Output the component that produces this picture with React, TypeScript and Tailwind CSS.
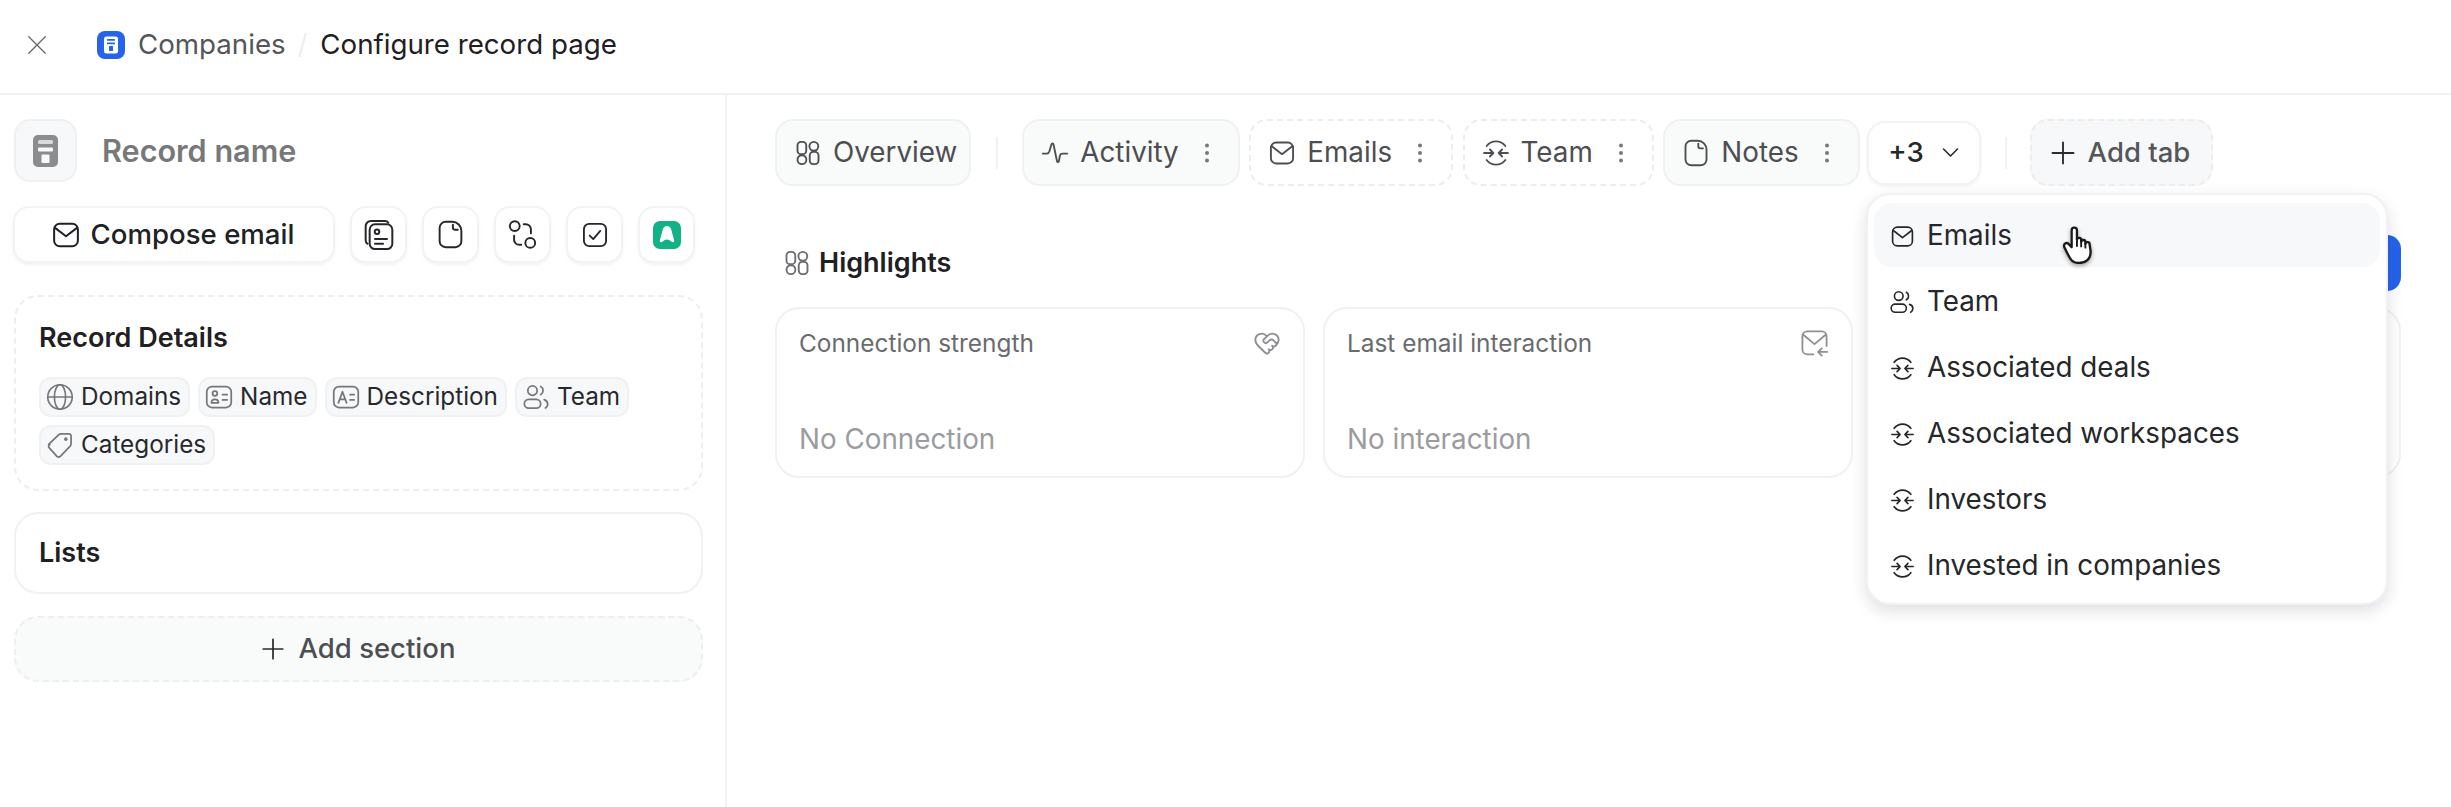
import { HeartHandshake } from 'lucide-react';
import type { ReactNode } from 'react';

type IconProps = { className?: string };

function Svg({ className, children, sw = 1.8 }: IconProps & { children: ReactNode; sw?: number }) {
  return (
    <svg viewBox="0 0 24 24" fill="none" stroke="currentColor" strokeWidth={sw} strokeLinecap="round" strokeLinejoin="round" className={`shrink-0 ${className ?? ''}`}>
      {children}
    </svg>
  );
}

const CloseIcon = (p: IconProps) => <Svg {...p} sw={1.4}><path d="M3 3l18 18M21 3L3 21" /></Svg>;
const PlusIcon = (p: IconProps) => <Svg {...p} sw={1.6}><path d="M12 3v18M3 12h18" /></Svg>;
const ChevronIcon = (p: IconProps) => <Svg {...p} sw={1.8}><path d="M4 8l8 8 8-8" /></Svg>;
const LayoutIcon = (p: IconProps) => (
  <Svg {...p} sw={1.6}>
    <rect x="3" y="2.500" width="7.500" height="10.500" rx="3" />
    <circle cx="17" cy="6.300" r="3.800" />
    <circle cx="6.800" cy="17.700" r="3.800" />
    <rect x="13.500" y="11" width="7.500" height="10.500" rx="3" />
  </Svg>
);
const ActivityIcon = (p: IconProps) => <Svg {...p} sw={1.6}><path d="M1.500 12.500h3.500c1.200 0 1.800-.8 2.200-2L9 4.500c.3-1 1.400-1 1.700 0l3 14.500c.3 1 1.300 1 1.600 0l1-5c.3-1 .9-1.500 2-1.500h4.200" /></Svg>;
const MailIcon = (p: IconProps) => (
  <Svg {...p} sw={1.6}>
    <rect x="2.500" y="3" width="19" height="18" rx="4.500" />
    <path d="M3.500 6.500L12 13l8.500-6.500" />
  </Svg>
);
const RelationIcon = (p: IconProps) => (
  <Svg {...p} sw={1.6}>
    <path d="M4 6A10 10 0 0 1 20 6M4 18A10 10 0 0 0 20 18" />
    <path d="M1.800 12h7.700M6.800 9l2.900 3-2.900 3M22.200 12h-7.700M17.200 9l-2.900 3 2.900 3" />
  </Svg>
);
const NoteIcon = (p: IconProps) => (
  <Svg {...p} sw={1.6}>
    <path d="M13.500 1.500H8a5 5 0 0 0-5 5v11a5 5 0 0 0 5 5h8a5 5 0 0 0 5-5V9a7.500 7.500 0 0 0-7.500-7.500z" />
    <path d="M14 4v2.500C14 7.300 14.700 8 15.500 8H18" />
  </Svg>
);
const UsersIcon = (p: IconProps) => (
  <Svg {...p} sw={1.5}>
    <circle cx="9" cy="6.500" r="4" />
    <rect x="2" y="14" width="14" height="7.500" rx="3.750" />
    <path d="M16 3a4 4 0 0 1 0 7M19 14.200c1.800.6 3 2.200 3 3.800s-.8 2.800-2 3.400" />
  </Svg>
);
const GlobeIcon = (p: IconProps) => (
  <Svg {...p} sw={1.4}>
    <circle cx="12" cy="12" r="10.500" />
    <ellipse cx="12" cy="12" rx="4.800" ry="10.500" />
    <path d="M1.500 12h21" />
  </Svg>
);
const NameIcon = (p: IconProps) => (
  <Svg {...p} sw={1.5}>
    <rect x="1.500" y="3" width="21" height="18" rx="4.500" />
    <circle cx="8.500" cy="9" r="2" />
    <path d="M5.500 17c0-2 1.200-3 3-3s3 1 3 3zM15 10h4M15 14.500h4" />
  </Svg>
);
const TextIcon = (p: IconProps) => (
  <Svg {...p} sw={1.5}>
    <rect x="1.500" y="3" width="21" height="18" rx="4.500" />
    <path d="M5.500 17l3.500-9.500 3.500 9.500M6.800 14h4.400M15.500 10h3.500M15.500 14.500h3.500" />
  </Svg>
);
const TagIcon = (p: IconProps) => (
  <Svg {...p} sw={1.5}>
    <path d="M2.300 11.500l8.700-8.300c.5-.5 1.200-.8 2-.8h6.500a2 2 0 0 1 2 2V11c0 .8-.3 1.500-.8 2l-8.400 8.700c-.8.800-2.100.8-2.900 0l-6.600-7.200c-.8-.8-.8-2.200.5-3z" />
    <circle cx="17" cy="7" r=".8" fill="currentColor" />
  </Svg>
);
const StackIcon = (p: IconProps) => (
  <Svg {...p} sw={1.5}>
    <path d="M19 2.800A3 3 0 0 0 16.500 1.500H6A4 4 0 0 0 2 5.500V16c0 1 .5 2 1.300 2.600" />
    <rect x="5" y="4" width="17" height="18.500" rx="4" />
    <circle cx="10.500" cy="9.500" r="1.700" />
    <path d="M9 15h9M9 18.500h6" />
  </Svg>
);
const FlowIcon = (p: IconProps) => (
  <Svg {...p} sw={1.5}>
    <circle cx="6" cy="5.500" r="3.800" />
    <circle cx="18" cy="18.500" r="3.800" />
    <path d="M13 4h1.500a4 4 0 0 1 4 4v3M5.500 13v3a4 4 0 0 0 4 4H11" />
  </Svg>
);
const CheckIcon = (p: IconProps) => (
  <Svg {...p} sw={1.6}>
    <rect x="2.500" y="2.500" width="19" height="19" rx="4.500" />
    <path d="M7.500 12.500l3 3 6-7" />
  </Svg>
);
const MailBackIcon = (p: IconProps) => (
  <Svg {...p} sw={1.5}>
    <path d="M11 21H6a4 4 0 0 1-4-4V6a4 4 0 0 1 4-4h12a4 4 0 0 1 4 4v8" />
    <path d="M3 5l9 7.500L21 5M22.500 19H15M18 16l-3 3 3 3" />
  </Svg>
);
const DotsIcon = ({ className }: IconProps) => (
  <svg viewBox="0 0 24 24" fill="currentColor" className={`shrink-0 ${className ?? ''}`}>
    <circle cx="12" cy="4.500" r="2" />
    <circle cx="12" cy="12" r="2" />
    <circle cx="12" cy="19.500" r="2" />
  </svg>
);
const CompanyLogo = ({ className }: IconProps) => (
  <svg viewBox="0 0 28 28" className={`shrink-0 ${className ?? ''}`}>
    <rect width="28" height="28" rx="8" fill="#2563eb" />
    <rect x="7" y="5.500" width="14" height="17" rx="2.500" fill="#fff" />
    <rect x="10" y="8" width="8" height="1.800" rx=".5" fill="#2563eb" />
    <rect x="10" y="11.500" width="8" height="1.800" rx=".5" fill="#2563eb" />
    <rect x="12" y="15" width="4" height="5" rx=".5" fill="#2563eb" />
  </svg>
);
const RecordGlyph = ({ className }: IconProps) => (
  <svg viewBox="0 0 25 32" className={`shrink-0 ${className ?? ''}`}>
    <rect width="25" height="32" rx="5" fill="#8b8c8e" />
    <rect x="5" y="5" width="15" height="4" rx="1.500" fill="#d8d9da" />
    <rect x="5" y="12.500" width="15" height="4" rx="1" fill="#f7f8f9" />
    <rect x="8.500" y="19.500" width="8" height="8.500" rx="1" fill="#f7f8f9" />
  </svg>
);
const HandCursor = ({ className }: IconProps) => (
  <svg viewBox="0 0 30 36" className={className}>
    <path
      d="M9 4a2.500 2.500 0 0 1 5 0v9a2 2 0 0 1 4 .5V15a2 2 0 0 1 4 .5V17a2 2 0 0 1 4 .5l1 6.500c0 7-4 11-11 11-6 0-8-3-10-7l-4-8c-1-3 2-5 4-3l3 3z"
      fill="#fff"
      stroke="#1a1a1a"
      strokeWidth="2.200"
      strokeLinejoin="round"
    />
    <path d="M14 13v6M18 14.500v5M22 16.500v4" fill="none" stroke="#1a1a1a" strokeWidth="1.800" strokeLinecap="round" />
  </svg>
);

function Tab({ icon, label, kind, menu }: { icon: ReactNode; label: string; kind: 'solid' | 'dashed'; menu?: boolean }) {
  return (
    <div
      className={`flex h-[67px] shrink-0 items-center gap-[11px] rounded-[18px] border-2 pl-[17px] text-[27.8px] text-[#4d4e52] ${
        menu ? 'pr-[19px]' : 'pr-[12px]'
      } ${kind === 'solid' ? 'border-[#f0f1f1] bg-[#f9fafa]' : 'border-dashed border-[#ededee] bg-white'}`}
    >
      {icon}
      <span className="whitespace-nowrap">{label}</span>
      {menu && <DotsIcon className="ml-[5px] h-[24px] w-[24px] text-[#77787c]" />}
    </div>
  );
}

function Chip({ icon, label }: { icon: ReactNode; label: string }) {
  return (
    <div className="flex h-[40px] items-center gap-[7px] rounded-[12px] border-2 border-[#f0f1f2] bg-[#f7f8f9] pl-[5px] pr-[7px] text-[24.3px] text-[#28292c]">
      <span className="text-[#76777a]">{icon}</span>
      <span className="whitespace-nowrap">{label}</span>
    </div>
  );
}

function IconBtn({ children }: { children: ReactNode }) {
  return (
    <div className="flex h-[57px] w-[57px] items-center justify-center rounded-[16px] border-2 border-[#f2f3f4] bg-white text-[#26272b] shadow-[0_2px_3px_rgba(20,30,50,0.06)]">
      {children}
    </div>
  );
}

function Card({ title, value, icon }: { title: string; value?: string; icon?: ReactNode }) {
  return (
    <div className="flex h-[171px] flex-col justify-between rounded-[24px] border-2 border-[#f0f1f1] bg-white px-[22px] pb-[15px] pt-[16px]">
      <div className="flex items-center justify-between text-[24.4px] text-[#6a6b6f]">
        <span>{title}</span>
        <span className="text-[#8e8f92]">{icon}</span>
      </div>
      <div className="text-[27.8px] text-[#9b9c9f]">{value}</div>
    </div>
  );
}

const menuItems = [
  { label: 'Emails', icon: <MailIcon className="h-[25px] w-[25px]" /> },
  { label: 'Team', icon: <UsersIcon className="h-[26px] w-[26px]" /> },
  { label: 'Associated deals', icon: <RelationIcon className="h-[25px] w-[25px]" /> },
  { label: 'Associated workspaces', icon: <RelationIcon className="h-[25px] w-[25px]" /> },
  { label: 'Investors', icon: <RelationIcon className="h-[25px] w-[25px]" /> },
  { label: 'Invested in companies', icon: <RelationIcon className="h-[25px] w-[25px]" /> },
];

export default function App() {
  return (
    <div className="flex h-[807px] w-[2451px] flex-col overflow-hidden bg-white font-[family-name:Inter,sans-serif]">
      <header className="flex h-[95px] shrink-0 items-center border-b-2 border-[#f1f1f2] pb-[3px]">
        <div className="flex w-[97px] justify-start pl-[26px] text-[#66676a]">
          <CloseIcon className="h-[22px] w-[22px]" />
        </div>
        <CompanyLogo className="h-[28px] w-[28px]" />
        <span className="ml-[13px] text-[27.7px] text-[#55565a]">Companies</span>
        <span className="ml-[12px] text-[27.7px] font-light text-[#ebebec]">/</span>
        <span className="ml-[13px] text-[27.7px] text-[#1f2023]">Configure record page</span>
      </header>

      <div className="flex min-h-0 flex-1">
        <aside className="w-[727px] shrink-0 border-r-2 border-[#f1f1f2] pl-[14px] pr-[22px] pt-[24px]">
          <div className="flex items-center gap-[25px]">
            <div className="flex h-[63px] w-[63px] items-center justify-center rounded-[16px] border-2 border-[#eff0f1] bg-[#f7f8f9]">
              <RecordGlyph className="h-[32px] w-[25px]" />
            </div>
            <span className="text-[30.6px] font-semibold text-[#77787a]">Record name</span>
          </div>

          <div className="-ml-[1px] mt-[24px] flex gap-[15px]">
            <div className="flex h-[57px] w-[322px] items-center justify-center gap-[10px] rounded-[16px] border-2 border-[#f2f3f4] bg-white pr-[3px] text-[27.6px] font-medium text-[#202125] shadow-[0_2px_3px_rgba(20,30,50,0.06)]">
              <MailIcon className="h-[30px] w-[30px]" />
              Compose email
            </div>
            <IconBtn><StackIcon className="h-[32px] w-[32px]" /></IconBtn>
            <IconBtn><NoteIcon className="h-[29px] w-[29px]" /></IconBtn>
            <IconBtn><FlowIcon className="h-[31px] w-[31px]" /></IconBtn>
            <IconBtn><CheckIcon className="h-[28px] w-[28px]" /></IconBtn>
            <IconBtn>
              <svg viewBox="0 0 28 28" className="h-[28px] w-[28px]">
                <rect width="28" height="28" rx="7" fill="#10b286" />
                <path d="M14 5c-2.200 0-3.600 1.200-4.200 3.500L6.800 19.500c-.3 1.300 1 2.200 2 1.500l2.600-1.700c1.600-1 3.600-1 5.200 0l2.600 1.700c1 .7 2.300-.2 2-1.500L18.200 8.500C17.600 6.200 16.200 5 14 5z" fill="#fff" />
              </svg>
            </IconBtn>
          </div>

          <section className="mt-[32px] rounded-[24px] border-2 border-dashed border-[#eeeeef] px-[23px] pb-[24px] pt-[21px]">
            <h3 className="text-[27px] font-semibold text-[#1f2023]">Record Details</h3>
            <div className="mt-[18px] flex flex-wrap gap-[8px]">
              <Chip icon={<GlobeIcon className="h-[28px] w-[28px]" />} label="Domains" />
              <Chip icon={<NameIcon className="h-[28px] w-[28px]" />} label="Name" />
              <Chip icon={<TextIcon className="h-[28px] w-[28px]" />} label="Description" />
              <Chip icon={<UsersIcon className="h-[28px] w-[28px]" />} label="Team" />
              <Chip icon={<TagIcon className="h-[28px] w-[28px]" />} label="Categories" />
            </div>
          </section>

          <section className="mt-[21px] flex h-[82px] items-center rounded-[24px] border-2 border-[#f0f1f1] px-[23px] pt-[2px]">
            <h3 className="text-[27px] font-semibold text-[#1f2023]">Lists</h3>
          </section>

          <div className="mt-[22px] flex h-[66px] items-center justify-center gap-[13px] rounded-[24px] border-2 border-dashed border-[#eeeeef] bg-[#f9fafa] pr-[2px] text-[27.5px] font-medium text-[#4d4e52]">
            <PlusIcon className="h-[26px] w-[26px] text-[#2a2b2e]" />
            Add section
          </div>
        </aside>

        <main className="relative min-w-0 flex-1 pl-[48px] pr-[50px] pt-[24px]">
          <div className="flex items-center">
            <Tab kind="solid" label="Overview" icon={<LayoutIcon className="h-[28px] w-[28px]" />} />
            <div className="ml-[25px] mr-[24px] h-[32px] w-[2px] bg-[#f0f1f1]" />
            <div className="flex items-center gap-[9.5px]">
              <Tab kind="solid" label="Activity" menu icon={<ActivityIcon className="h-[28px] w-[28px]" />} />
              <Tab kind="dashed" label="Emails" menu icon={<MailIcon className="h-[28px] w-[28px]" />} />
              <Tab kind="dashed" label="Team" menu icon={<RelationIcon className="h-[28px] w-[28px]" />} />
              <Tab kind="solid" label="Notes" menu icon={<NoteIcon className="h-[28px] w-[28px]" />} />
            </div>
            <div className="ml-[7px] flex h-[64px] w-[114px] items-center justify-center gap-[16px] rounded-[18px] border-2 border-[#f2f3f4] bg-white pl-[2px] text-[27.6px] font-medium text-[#26272b] shadow-[0_2px_3px_rgba(20,30,50,0.05)]">
              +3
              <ChevronIcon className="h-[21px] w-[21px]" />
            </div>
            <div className="ml-[24px] mr-[23px] h-[32px] w-[2px] bg-[#f0f1f1]" />
            <div className="flex h-[67px] items-center gap-[11px] rounded-[18px] border-2 border-dashed border-[#ededee] bg-[#f7f8f9] pl-[17px] pr-[21px] text-[27.5px] font-medium text-[#55565a]">
              <PlusIcon className="h-[28px] w-[28px] text-[#2a2b2e]" />
              Add tab
            </div>
          </div>

          <div className="mt-[49px] flex h-[56px] items-center justify-between">
            <div className="flex items-center gap-[8px] pl-[8px] text-[27px] font-semibold text-[#1f2023]">
              <LayoutIcon className="h-[28px] w-[28px] text-[#6c6d70]" />
              Highlights
            </div>
            <div className="h-[56px] w-[200px] rounded-[14px] bg-[#2563eb]" />
          </div>

          <div className="mt-[16px] grid grid-cols-3 gap-[18px]">
            <Card title="Connection strength" value="No Connection" icon={<HeartHandshake className="h-[28px] w-[28px]" strokeWidth={1.6} />} />
            <Card title="Last email interaction" value="No interaction" icon={<MailBackIcon className="h-[29px] w-[29px]" />} />
            <Card title="" />
          </div>

          <div className="absolute left-[1139px] top-[98px] w-[522px] rounded-[24px] border-2 border-[#f0f1f2] bg-white px-[6px] pb-[5px] pt-[8px] shadow-[0_6px_16px_rgba(20,30,50,0.14)]">
            {menuItems.map((item, i) => (
              <div
                key={item.label}
                className={`flex items-center gap-[12px] rounded-[18px] pl-[15px] pt-[2px] text-[27.8px] text-[#26272b] ${
                  i === 0 ? 'mb-[1px] h-[64px] bg-[#f7f8fa]' : 'h-[66px]'
                }`}
              >
                <span className="flex w-[26px] justify-center">{item.icon}</span>
                {item.label}
              </div>
            ))}
          </div>

          <HandCursor className="absolute left-[1335px] top-[131px] h-[38px] w-[32px] drop-shadow-[0_2px_2px_rgba(0,0,0,0.35)]" />
        </main>
      </div>
    </div>
  );
}
